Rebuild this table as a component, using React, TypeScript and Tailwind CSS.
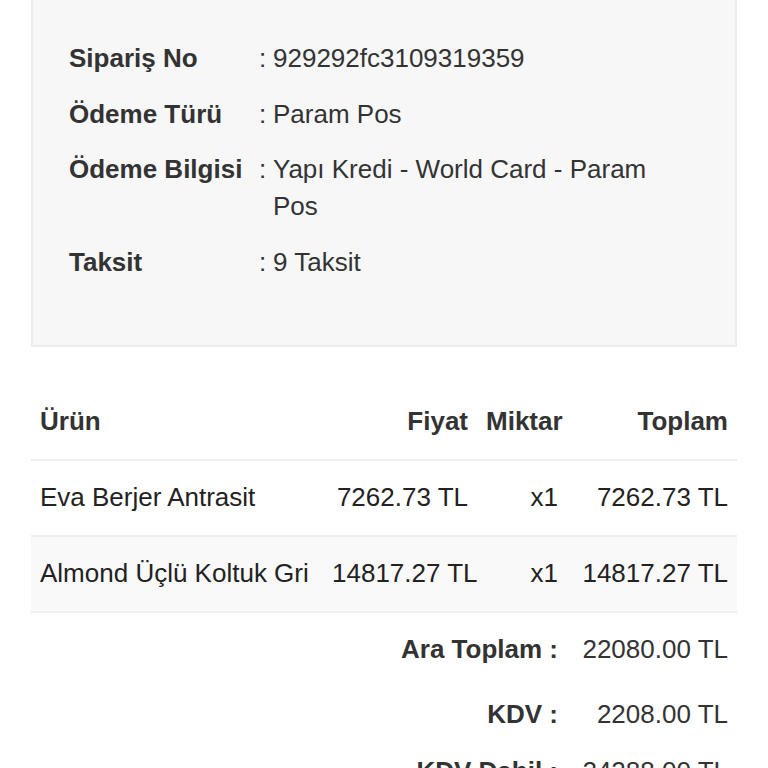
const info = [
  { label: 'Sipariş No', value: '929292fc3109319359' },
  { label: 'Ödeme Türü', value: 'Param Pos' },
  { label: 'Ödeme Bilgisi', value: 'Yapı Kredi - World Card - Param Pos' },
  { label: 'Taksit', value: '9 Taksit' },
]

const items = [
  { name: 'Eva Berjer Antrasit', price: '7262.73 TL', qty: 'x1', total: '7262.73 TL' },
  { name: 'Almond Üçlü Koltuk Gri', price: '14817.27 TL', qty: 'x1', total: '14817.27 TL' },
]

const totals = [
  { label: 'Ara Toplam :', value: '22080.00 TL', pad: 'pt-[18px] pb-[18px]' },
  { label: 'KDV :', value: '2208.00 TL', pad: 'py-[10px]' },
  { label: 'KDV Dahil :', value: '24288.00 TL', pad: 'py-[10px]' },
]

export default function App() {
  return (
    <div
      className="min-h-screen bg-white text-[26px] leading-[37px] text-[#333]"
      style={{ fontFamily: '"Liberation Sans", Arial, sans-serif' }}
    >
      <div className="ml-[31px] w-[706px] border-2 border-t-0 border-[#ececec] bg-[#f7f7f7] pl-[36px] pr-[48px] pt-[40px] pb-[64px]">
        <div className="flex flex-col gap-[18.5px]">
          {info.map((row) => (
            <div key={row.label} className="flex">
              <div className="w-[190px] shrink-0 font-bold">{row.label}</div>
              <div className="w-[14px] shrink-0">:</div>
              <div className="min-w-0 flex-1">{row.value}</div>
            </div>
          ))}
        </div>
      </div>

      <table className="ml-[31px] mt-[37px] w-[706px] table-fixed border-collapse">
        <colgroup>
          <col className="w-[292px]" />
          <col className="w-[154px]" />
          <col className="w-[90px]" />
          <col className="w-[170px]" />
        </colgroup>
        <thead>
          <tr className="border-b-2 border-[#eeeeee] font-bold">
            <th className="px-[9px] py-[19px] text-left">Ürün</th>
            <th className="px-[9px] py-[19px] text-right">Fiyat</th>
            <th className="px-[9px] py-[19px] text-right">Miktar</th>
            <th className="px-[9px] py-[19px] text-right">Toplam</th>
          </tr>
        </thead>
        <tbody>
          {items.map((it, i) => (
            <tr
              key={it.name}
              className={
                i % 2 === 1
                  ? 'border-b-2 border-[#eeeeee] bg-[#f9f9f9] text-[#222]'
                  : 'border-b-2 border-[#eeeeee] text-[#222]'
              }
            >
              <td className="whitespace-nowrap px-[9px] py-[18.5px] text-left">{it.name}</td>
              <td className="whitespace-nowrap px-[9px] py-[18.5px] text-right">{it.price}</td>
              <td className="px-[9px] py-[18.5px] text-right">{it.qty}</td>
              <td className="whitespace-nowrap px-[9px] py-[18.5px] text-right">{it.total}</td>
            </tr>
          ))}
          {totals.map((t) => (
            <tr key={t.label}>
              <td colSpan={3} className={`px-[9px] text-right font-bold ${t.pad}`}>
                {t.label}
              </td>
              <td className={`whitespace-nowrap px-[9px] text-right ${t.pad}`}>{t.value}</td>
            </tr>
          ))}
        </tbody>
      </table>
    </div>
  )
}
